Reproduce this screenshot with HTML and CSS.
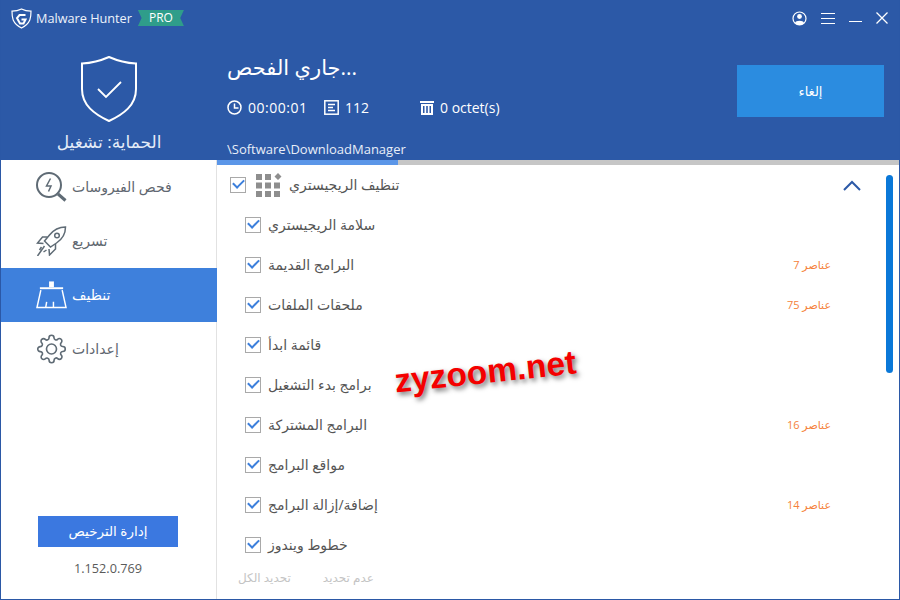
FILE: index.html
```html
<!DOCTYPE html>
<html>
<head>
    <title>Malware Hunter</title>
    <meta charset="utf-8">
    <link rel="stylesheet" href="styles.css">
</head>
<body>
<div class="window">
    <div class="header">
        <div class="titlebar">
            <div class="brand">
                <svg class="brand-logo" width="21" height="21" viewBox="0 0 21 21" fill="none" stroke="#fff">
                    <path d="M10.500 1 C7.500 2.600 4.500 3.200 1 3.200 C1 9 1 15 10.500 20 C20 15 20 9 20 3.200 C16.500 3.200 13.500 2.600 10.500 1Z" stroke-width="1.200"/>
                    <path d="M14.500 7 H8.500 L6 10 L9 15.500 H12.500 L14.500 11.500 H10.500" stroke-width="2"/>
                </svg>
                <span class="brand-name">Malware Hunter</span>
                <span class="pro">PRO</span>
            </div>
            <div class="controls">
                <svg width="15" height="15" viewBox="0 0 15 15" fill="none">
                    <circle cx="7.500" cy="7.500" r="6.500" stroke="#fff" stroke-width="1.200"/>
                    <circle cx="7.500" cy="5.500" r="2.400" fill="#fff"/>
                    <path d="M3 12 C3.500 9 11.500 9 12 12 L9.500 14 H5.500Z" fill="#fff"/>
                </svg>
                <svg width="14" height="13" viewBox="0 0 14 13" stroke="#fff" stroke-width="1">
                    <path d="M0 1.500H14M0 6.500H14M0 11.500H14"/>
                </svg>
                <svg width="13" height="13" viewBox="0 0 13 13" stroke="#fff" stroke-width="1">
                    <path d="M0 9.500H13"/>
                </svg>
                <svg width="12" height="12" viewBox="0 0 12 12" stroke="#fff" stroke-width="1.300">
                    <path d="M.5 .5L11.500 11.500M11.500 .5L.5 11.500"/>
                </svg>
            </div>
        </div>
        <div class="header-main">
            <div class="protect">
                <svg width="58" height="68" viewBox="0 0 58 68" fill="none" stroke="#fff">
                    <path d="M29 2 C21 5.500 11 8 2 8.500 V34 C2 50 14 59 29 66 C44 59 56 50 56 34 V8.500 C47 8 37 5.500 29 2Z" stroke-width="2"/>
                    <path d="M18 34 L26 42 L41 27" stroke-width="1.800"/>
                </svg>
                <div class="protect-label">الحماية: تشغيل</div>
            </div>
            <div class="scan">
                <div class="scan-title">جاري الفحص...</div>
                <div class="stats">
                    <span class="stat stat-time">
                        <svg width="15" height="15" viewBox="0 0 15 15" fill="none" stroke="#fff" stroke-width="1.500">
                            <circle cx="7.500" cy="7.500" r="6.500"/>
                            <path d="M7.500 3.500V8H11.500"/>
                        </svg>
                        00:00:01
                    </span>
                    <span class="stat stat-files">
                        <svg width="15" height="15" viewBox="0 0 15 15" fill="none" stroke="#fff" stroke-width="1.500">
                            <rect x=".8" y=".8" width="13.400" height="13.400"/>
                            <path d="M4 4.500H11M4 7.500H9M4 10.500H11"/>
                        </svg>
                        112
                    </span>
                    <span class="stat">
                        <svg width="14" height="14" viewBox="0 0 14 14" fill="#fff">
                            <path d="M0 0H14V2H0ZM1 3H13V14H1ZM3 5V12H4.500V5ZM6.200 5V12H7.800V5ZM9.500 5V12H11V5Z" fill-rule="evenodd"/>
                        </svg>
                        0 octet(s)
                    </span>
                </div>
                <div class="scan-path">\Software\DownloadManager</div>
            </div>
            <div class="cancel">إلغاء</div>
        </div>
    </div>
    <div class="body">
        <div class="sidebar">
            <div class="nav">
                <div class="nav-item">
                    <svg width="31" height="30" viewBox="0 0 31 30" fill="none" stroke="#5f6b75" stroke-width="2">
                        <circle cx="13" cy="13" r="12"/>
                        <path d="M22 22L29.500 28.500" stroke-width="3"/>
                        <path d="M14.500 6.500L10.500 14H15L12.500 19.500" stroke-width="1.500"/>
                    </svg>
                    <span>فحص الفيروسات</span>
                </div>
                <div class="nav-item">
                    <svg width="31" height="30" viewBox="0 0 30 30" fill="none" stroke="#5f6b75" stroke-width="1.500">
                        <path d="M29 1 C22 1 17 4 13 9 L8 15 L14 21 L20 17 C26 13 29 8 29 1Z"/>
                        <circle cx="20.500" cy="9.500" r="2.300"/>
                        <path d="M11 11H6L1 17L7 17.500M19 18V23L13 29L12.500 23"/>
                        <path d="M8 20L1 30M5 21L3 24M10 24L7 26"/>
                    </svg>
                    <span>تسريع</span>
                </div>
                <div class="nav-item active">
                    <svg width="31" height="28" viewBox="0 0 32 28" fill="none" stroke="#fff" stroke-width="1.500">
                        <path d="M13.500 0H18.500V6H13.500Z" fill="#fff" stroke="none"/>
                        <path d="M4 7H28" stroke-width="2"/>
                        <path d="M5 9L1 27H31L27 9"/>
                        <path d="M10 27L11 21M18 27V21" stroke-width="1.500"/>
                    </svg>
                    <span>تنظيف</span>
                </div>
                <div class="nav-item">
                    <svg width="31" height="30" viewBox="0 0 24 24" fill="none" stroke="#5f6b75" stroke-width="1.300">
                        <circle cx="12" cy="12" r="4"/>
                        <path d="M19.400 15a1.650 1.650 0 0 0 .33 1.820l.06.06a2 2 0 0 1 0 2.830 2 2 0 0 1-2.830 0l-.06-.06a1.650 1.650 0 0 0-1.820-.33 1.650 1.650 0 0 0-1 1.510V21a2 2 0 0 1-2 2 2 2 0 0 1-2-2v-.09A1.650 1.650 0 0 0 9 19.400a1.650 1.650 0 0 0-1.820.33l-.06.06a2 2 0 0 1-2.830 0 2 2 0 0 1 0-2.830l.06-.06a1.650 1.650 0 0 0 .33-1.820 1.650 1.650 0 0 0-1.510-1H3a2 2 0 0 1-2-2 2 2 0 0 1 2-2h.09A1.650 1.650 0 0 0 4.600 9a1.650 1.650 0 0 0-.33-1.820l-.06-.06a2 2 0 0 1 0-2.830 2 2 0 0 1 2.830 0l.06.06a1.650 1.650 0 0 0 1.820.33H9a1.650 1.650 0 0 0 1-1.510V3a2 2 0 0 1 2-2 2 2 0 0 1 2 2v.09a1.650 1.650 0 0 0 1 1.510 1.650 1.650 0 0 0 1.820-.33l.06-.06a2 2 0 0 1 2.830 0 2 2 0 0 1 0 2.830l-.06.06a1.650 1.650 0 0 0-.33 1.820V9a1.650 1.650 0 0 0 1.510 1H21a2 2 0 0 1 2 2 2 2 0 0 1-2 2h-.09a1.650 1.650 0 0 0-1.510 1z"/>
                    </svg>
                    <span>إعدادات</span>
                </div>
            </div>
            <div class="side-foot">
                <div class="license">إدارة الترخيص</div>
                <div class="version">1.152.0.769</div>
            </div>
        </div>
        <div class="content">
            <div class="progress"><div class="progress-fill"></div></div>
            <div class="panel">
                <div class="group-head">
                    <span class="check"></span>
                    <svg class="group-icon" width="26" height="24" viewBox="0 0 26 24" fill="#8e8e8e">
                        <path d="M0 1h6v6H0zM9 1h6v6H9zM22 0l3.500 3.500L22 7l-3.500-3.500zM0 9.500h6v6H0zM9 9.500h6v6H9zM18 9.500h6v6h-6zM0 18h6v6H0zM9 18h6v6H9zM18 18h6v6h-6z"/>
                    </svg>
                    <span class="group-name">تنظيف الريجيستري</span>
                    <svg class="chevron" width="18" height="11" viewBox="0 0 18 11" fill="none" stroke="#2c59a7" stroke-width="2">
                        <path d="M1 10L9 2L17 10"/>
                    </svg>
                </div>
                <div class="row"><span class="check"></span><span class="row-name">سلامة الريجيستري</span></div>
                <div class="row"><span class="check"></span><span class="row-name">البرامج القديمة</span><span class="count">عناصر 7</span></div>
                <div class="row"><span class="check"></span><span class="row-name">ملحقات الملفات</span><span class="count">عناصر 75</span></div>
                <div class="row"><span class="check"></span><span class="row-name">قائمة ابدأ</span></div>
                <div class="row"><span class="check"></span><span class="row-name">برامج بدء التشغيل</span></div>
                <div class="row"><span class="check"></span><span class="row-name">البرامج المشتركة</span><span class="count">عناصر 16</span></div>
                <div class="row"><span class="check"></span><span class="row-name">مواقع البرامج</span></div>
                <div class="row"><span class="check"></span><span class="row-name">إضافة/إزالة البرامج</span><span class="count">عناصر 14</span></div>
                <div class="row"><span class="check"></span><span class="row-name">خطوط ويندوز</span></div>
                <div class="select-links">
                    <span>تحديد الكل</span>
                    <span>عدم تحديد</span>
                </div>
                <div class="scrollbar"></div>
            </div>
        </div>
    </div>
    <div class="watermark">zyzoom.net</div>
</div>
</body>
</html>
```
FILE: styles.css
```css
* {
    box-sizing: border-box;
}
html, body {
    margin: 0;
    height: 100%;
}
body {
    font-family: "Open Sans", "DejaVu Sans", sans-serif;
    font-size: 14px;
    background-color: #fff;
}
.window {
    position: relative;
    width: 900px;
    height: 600px;
    display: flex;
    flex-direction: column;
    border: 1px solid #2b58a6;
    border-top: 0;
    overflow: hidden;
}

/* header */
.header {
    height: 160px;
    background-color: #2c59a7;
    color: #fff;
    display: flex;
    flex-direction: column;
}
.titlebar {
    height: 36px;
    display: flex;
    justify-content: space-between;
    align-items: center;
    padding: 0 11px 0 10px;
}
.brand {
    display: flex;
    align-items: center;
}
.brand-name {
    margin-left: 4px;
    font-size: 12.7px;
    color: #eef3fb;
}
.pro {
    margin-left: 6px;
    width: 46px;
    height: 16px;
    line-height: 16px;
    text-align: center;
    font-size: 12px;
    background-color: #2f9d8a;
    clip-path: polygon(0 0, 100% 0, 92% 50%, 100% 100%, 0 100%, 8% 50%);
}
.controls {
    display: flex;
    align-items: center;
    gap: 14px;
}
.header-main {
    flex: 1;
    display: flex;
}
.protect {
    width: 216px;
    display: flex;
    flex-direction: column;
    align-items: center;
    padding-top: 19px;
}
.protect-label {
    margin-top: 7px;
    font-size: 17px;
    color: #e4ecf8;
}
.scan {
    flex: 1;
    padding: 18px 0 0 10px;
}
.scan-title {
    font-size: 21px;
    line-height: 26px;
}
.stats {
    display: flex;
    margin-top: 18px;
}
.stat {
    display: flex;
    align-items: center;
    gap: 6px;
}
.stat-time {
    width: 97px;
    letter-spacing: .5px;
}
.stat-files {
    width: 96px;
}
.scan-path {
    margin-top: 23px;
    font-size: 13px;
    color: #e8eef8;
}
.cancel {
    width: 147px;
    height: 52px;
    margin: 29px 15px 0 0;
    background-color: #2b8ce0;
    font-size: 13px;
    line-height: 52px;
    text-align: center;
}

/* sidebar */
.body {
    flex: 1;
    display: flex;
    min-height: 0;
}
.sidebar {
    width: 216px;
    display: flex;
    flex-direction: column;
    justify-content: space-between;
    border-right: 1px solid #e2e2e2;
}
.nav-item {
    height: 54px;
    display: flex;
    align-items: center;
    padding-left: 35px;
    gap: 5px;
    color: #5f6770;
}
.nav-item svg {
    flex: none;
}
.nav-item span {
    padding-bottom: 2px;
}
.nav-item.active {
    margin-right: -1px;
    background-color: #3e80dc;
    color: #fff;
}
.side-foot {
    display: flex;
    flex-direction: column;
    align-items: center;
    padding: 0 1px 22px 0;
}
.license {
    width: 140px;
    height: 31px;
    line-height: 31px;
    text-align: center;
    font-size: 13.5px;
    background-color: #3b78e0;
    color: #fff;
}
.version {
    margin-top: 12px;
    font-size: 12.7px;
    color: #5a5a5a;
}

/* scan list */
.content {
    flex: 1;
    display: flex;
    flex-direction: column;
    min-width: 0;
}
.progress {
    height: 5px;
    background-color: #c6c6c6;
}
.progress-fill {
    width: 181px;
    height: 100%;
    background-color: #5b96e8;
}
.panel {
    position: relative;
    flex: 1;
    padding-left: 13px;
    color: #555;
}
.group-head {
    height: 40px;
    display: flex;
    align-items: center;
}
.group-icon {
    margin-left: 10px;
}
.group-name {
    margin-left: 7px;
    padding-bottom: 2px;
}
.chevron {
    margin-left: auto;
    margin-right: 38px;
}
.row {
    height: 40px;
    display: flex;
    align-items: center;
    padding-left: 15px;
}
.row-name {
    margin-left: 7px;
    padding-bottom: 2px;
}
.count {
    margin-left: auto;
    margin-right: 68px;
    padding-bottom: 2px;
    font-size: 11px;
    color: #f5813a;
}
.check {
    position: relative;
    flex: none;
    width: 16px;
    height: 16px;
    border: 1px solid #a9a9a9;
    background-color: #fff;
}
.check::after {
    content: "";
    position: absolute;
    left: 2px;
    top: 1px;
    width: 9px;
    height: 5px;
    border-left: 2px solid #3c7fdc;
    border-bottom: 2px solid #3c7fdc;
    transform: rotate(-45deg);
}
.select-links {
    display: flex;
    gap: 32px;
    margin-top: 4px;
    padding-left: 8px;
    font-size: 12px;
    color: #c4c4c4;
}
.scrollbar {
    position: absolute;
    left: 669px;
    top: 10px;
    width: 7px;
    height: 198px;
    border-radius: 4px;
    background-color: #0a78d8;
}

/* site stamp laid over the window */
.watermark {
    position: absolute;
    left: 393px;
    top: 353px;
    font-family: "Liberation Sans", sans-serif;
    font-size: 33.500px;
    font-weight: bold;
    color: #f40000;
    -webkit-text-stroke: 7px #fff;
    paint-order: stroke fill;
    text-shadow: 2px 3px 5px rgba(0, 0, 0, .55);
    transform: rotate(-6deg);
}
```
